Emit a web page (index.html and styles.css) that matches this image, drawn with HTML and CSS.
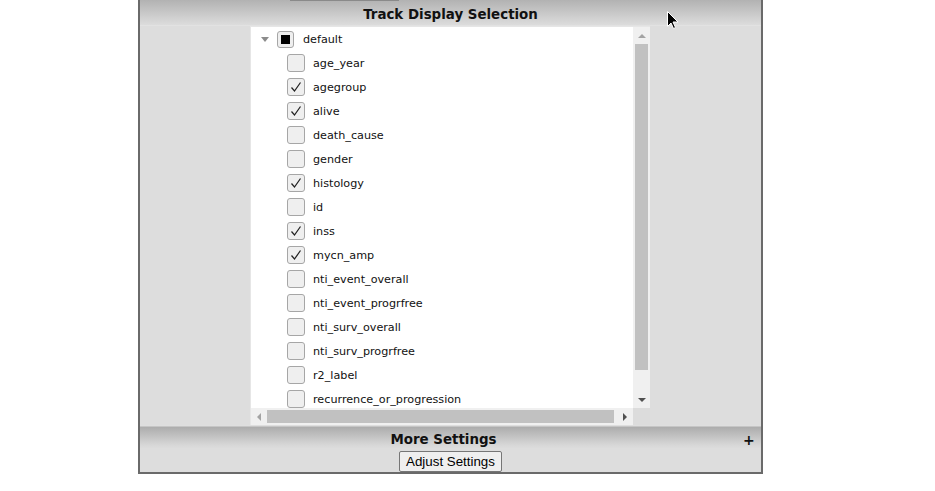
FILE: index.html
```html
<!DOCTYPE html>
<html>
<head>
<meta charset="utf-8">
<link rel="stylesheet" href="styles.css">
</head>
<body>
<div class="topstrip"></div>
<div class="panel">
  <div class="hdr">Track Display Selection</div>
  <div class="body">
    <div class="listbox">
      <div class="content">
        <div class="row root">
          <span class="twisty"></span>
          <span class="cb"><span class="ind"></span></span>
          <span class="lbl">default</span>
        </div>
        <div class="row child"><span class="cb"></span><span class="lbl">age_year</span></div>
        <div class="row child"><span class="cb on"><svg viewBox="0 0 18 18"><path d="M4.5 9.5 L7.5 13 L13.5 4.5" /></svg></span><span class="lbl">agegroup</span></div>
        <div class="row child"><span class="cb on"><svg viewBox="0 0 18 18"><path d="M4.5 9.5 L7.5 13 L13.5 4.5" /></svg></span><span class="lbl">alive</span></div>
        <div class="row child"><span class="cb"></span><span class="lbl">death_cause</span></div>
        <div class="row child"><span class="cb"></span><span class="lbl">gender</span></div>
        <div class="row child"><span class="cb on"><svg viewBox="0 0 18 18"><path d="M4.5 9.5 L7.5 13 L13.5 4.5" /></svg></span><span class="lbl">histology</span></div>
        <div class="row child"><span class="cb"></span><span class="lbl">id</span></div>
        <div class="row child"><span class="cb on"><svg viewBox="0 0 18 18"><path d="M4.5 9.5 L7.5 13 L13.5 4.5" /></svg></span><span class="lbl">inss</span></div>
        <div class="row child"><span class="cb on"><svg viewBox="0 0 18 18"><path d="M4.5 9.5 L7.5 13 L13.5 4.5" /></svg></span><span class="lbl">mycn_amp</span></div>
        <div class="row child"><span class="cb"></span><span class="lbl">nti_event_overall</span></div>
        <div class="row child"><span class="cb"></span><span class="lbl">nti_event_progrfree</span></div>
        <div class="row child"><span class="cb"></span><span class="lbl">nti_surv_overall</span></div>
        <div class="row child"><span class="cb"></span><span class="lbl">nti_surv_progrfree</span></div>
        <div class="row child"><span class="cb"></span><span class="lbl">r2_label</span></div>
        <div class="row child"><span class="cb"></span><span class="lbl">recurrence_or_progression</span></div>
      </div>
      <div class="vscroll">
        <div class="sbtn"><span class="arr up dis"></span></div>
        <div class="vtrack"><div class="vthumb"></div></div>
        <div class="sbtn"><span class="arr down"></span></div>
      </div>
      <div class="hscroll">
        <div class="hbtn"><span class="arr left dis"></span></div>
        <div class="htrack"><div class="hthumb"></div></div>
        <div class="hbtn"><span class="arr right"></span></div>
      </div>
      <div class="corner"></div>
    </div>
  </div>
  <div class="hdr hdr2"><span class="hdr2-title">More Settings</span><span class="plus">+</span></div>
  <div class="foot"><button class="btn">Adjust Settings</button></div>
</div>
<svg class="cursor" width="12" height="19" viewBox="0 0 12 19"><path d="M0.5 0.5 L0.5 15.5 L4 12 L6.5 17.5 L8.5 16.5 L6 11 L11 11 Z" fill="#000" stroke="#fff" stroke-width="1"/></svg>
</body>
</html>
```

FILE: styles.css
```css
html, body {
  margin: 0;
  padding: 0;
  background: #fff;
  width: 935px;
  height: 491px;
  overflow: hidden;
}

.topstrip {
  position: absolute;
  left: 290px;
  top: 0;
  width: 109px;
  height: 1px;
  background: #8a8a8a;
}

.panel {
  margin-left: 138px;
  width: 625px;
  box-sizing: border-box;
  border: 2px solid #6a6a6a;
  border-top: none;
  background: #dddddd;
  display: flex;
  flex-direction: column;
}

.hdr {
  height: 26px;
  box-sizing: border-box;
  background: linear-gradient(#b2b2b2, #d4d4d4 80%, #dcdcdc);
  border-bottom: 1px solid #e2e2e2;
  font-family: "DejaVu Sans", Verdana, sans-serif;
  font-weight: bold;
  font-size: 13.4px;
  color: #111;
  text-align: center;
  line-height: 30px;
}

.body {
  padding-left: 110px;
  display: flex;
}

.listbox {
  width: 400px;
  height: 399px;
  box-sizing: border-box;
  border: 1px solid #e6e6e6;
  border-right: none;
  background: #fff;
  display: grid;
  grid-template-columns: 382px 17px;
  grid-template-rows: 381px 17px;
}

.content {
  overflow: hidden;
  font-family: "DejaVu Sans", Verdana, sans-serif;
  font-size: 11.2px;
  color: #111;
}

.row {
  height: 24px;
  display: flex;
  align-items: center;
}

.root {
  padding-left: 10px;
}

.child {
  padding-left: 36px;
}

.twisty {
  width: 0;
  height: 0;
  border-left: 4px solid transparent;
  border-right: 4px solid transparent;
  border-top: 5px solid #8c8c8c;
  margin-right: 8px;
  margin-top: 1px;
}

.cb {
  width: 18px;
  height: 18px;
  box-sizing: border-box;
  border: 1px solid #a6a6a6;
  border-radius: 3px;
  background: #efefef;
  display: flex;
  align-items: center;
  justify-content: center;
  flex: none;
}

.root .cb {
  width: 17px;
  height: 17px;
}

.ind {
  width: 9px;
  height: 9px;
  background: #000;
}

.cb svg {
  width: 18px;
  height: 18px;
  margin: -1px;
}

.cb svg path {
  fill: none;
  stroke: #222;
  stroke-width: 1.25;
}

.lbl {
  margin-left: 8px;
  white-space: nowrap;
}

.root .lbl {
  margin-left: 9px;
}

.vscroll {
  grid-column: 2;
  grid-row: 1;
  background: #f0f0f0;
  display: flex;
  flex-direction: column;
}

.sbtn {
  height: 17px;
  display: flex;
  align-items: center;
  justify-content: center;
  flex: none;
}

.vtrack {
  flex: 1;
  padding: 0 2px;
}

.vthumb {
  height: 326px;
  background: #c1c1c1;
}

.hscroll {
  grid-column: 1;
  grid-row: 2;
  background: #f0f0f0;
  display: flex;
}

.hbtn {
  width: 16px;
  display: flex;
  align-items: center;
  justify-content: center;
  flex: none;
}

.htrack {
  flex: 1;
  padding: 2px 0 2px 0;
  display: flex;
}

.hthumb {
  width: 347px;
  background: #c1c1c1;
}

.corner {
  grid-column: 2;
  grid-row: 2;
  background: #dcdcdc;
}

.arr {
  width: 0;
  height: 0;
}

.arr.up {
  border-left: 4px solid transparent;
  border-right: 4px solid transparent;
  border-bottom: 4px solid #505050;
}

.arr.down {
  border-left: 4px solid transparent;
  border-right: 4px solid transparent;
  border-top: 4px solid #505050;
}

.arr.left {
  border-top: 4px solid transparent;
  border-bottom: 4px solid transparent;
  border-right: 4px solid #505050;
}

.arr.right {
  border-top: 4px solid transparent;
  border-bottom: 4px solid transparent;
  border-left: 4px solid #505050;
}

.arr.up.dis { border-bottom-color: #a3a3a3; }
.arr.left.dis { border-right-color: #a3a3a3; }

.hdr2 {
  height: 23px;
  display: flex;
  line-height: 30px;
  border-bottom: none;
  background: linear-gradient(#dedede 0, #dedede 1px, #acacac 2px, #d6d6d6 85%, #dcdcdc);
}

.hdr2-title {
  flex: 1;
  text-align: center;
  padding-left: 4px;
}

.plus {
  width: 18px;
  text-align: left;
  font-size: 14px;
}

.foot {
  height: 24px;
  display: flex;
  justify-content: center;
  align-items: flex-start;
  padding-top: 3px;
  box-sizing: border-box;
}

.btn {
  height: 21px;
  padding: 0 6px;
  font-family: "Liberation Sans", Arial, sans-serif;
  font-size: 13.33px;
  color: #000;
  background: #efefef;
  border: 1px solid #767676;
  border-radius: 2px;
  line-height: 17px;
}

.cursor {
  position: absolute;
  left: 667px;
  top: 11px;
}
```
